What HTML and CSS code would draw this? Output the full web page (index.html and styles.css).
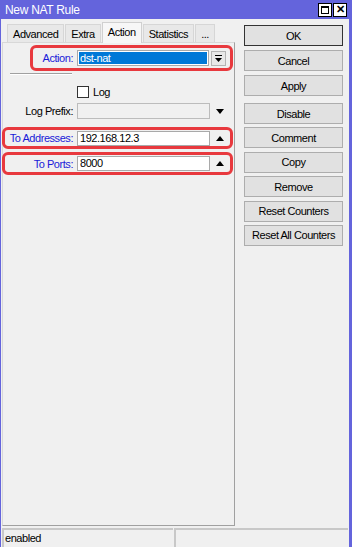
FILE: index.html
```html
<!DOCTYPE html>
<html lang="en">
<head>
    <meta charset="UTF-8">
    <title>New NAT Rule</title>
    <link rel="stylesheet" href="styles.css">
</head>
<body>
    <div class="window">
        <div class="titlebar">
            <span class="title">New NAT Rule</span>
            <div class="title-btns">
                <span class="tbtn"><span class="sq"></span></span>
                <span class="tbtn x">✕</span>
            </div>
        </div>

        <div class="main">
            <div class="left">
                <div class="tabs">
                    <div class="tab">Advanced</div>
                    <div class="tab">Extra</div>
                    <div class="tab active">Action</div>
                    <div class="tab">Statistics</div>
                    <div class="tab">...</div>
                </div>
                <div class="panel">
                    <div class="row hl row-action">
                        <div class="label blue lbl-action">Action:</div>
                        <div class="field sel"><span class="selected">dst-nat</span></div>
                        <div class="dd">
                            <svg viewBox="0 0 9 9" width="9" height="9">
                                <rect x="1" y="1" width="7" height="1" fill="#000"/>
                                <path d="M1 4 H8 L4.5 8 Z" fill="#000"/>
                            </svg>
                        </div>
                    </div>

                    <div class="sep"></div>

                    <div class="check-row">
                        <span class="checkbox"></span>
                        <span>Log</span>
                    </div>

                    <div class="row row-prefix">
                        <div class="label lbl-wide">Log Prefix:</div>
                        <div class="field disabled"></div>
                        <span class="arrow down"></span>
                    </div>

                    <div class="row hl row-addr">
                        <div class="label blue lbl-addr">To Addresses:</div>
                        <div class="field">192.168.12.3</div>
                        <span class="arrow up"></span>
                    </div>

                    <div class="row hl row-ports">
                        <div class="label blue lbl-addr">To Ports:</div>
                        <div class="field">8000</div>
                        <span class="arrow up"></span>
                    </div>
                </div>
            </div>

            <div class="buttons">
                <button class="btn default">OK</button>
                <button class="btn">Cancel</button>
                <button class="btn">Apply</button>
                <div class="btn-group">
                    <button class="btn">Disable</button>
                    <button class="btn">Comment</button>
                    <button class="btn">Copy</button>
                    <button class="btn">Remove</button>
                    <button class="btn">Reset Counters</button>
                    <button class="btn">Reset All Counters</button>
                </div>
            </div>
        </div>

        <div class="statusbar">
            <div class="pane first">enabled</div>
            <div class="pane"></div>
        </div>
    </div>
</body>
</html>
```

FILE: styles.css
```css
* {
    box-sizing: border-box;
}
body {
    margin: 0;
    font-family: 'Liberation Sans', Arial, sans-serif;
    font-size: 11px;
    letter-spacing: -0.45px;
    color: #000;
    background: #f0f0f0;
}
.window {
    width: 352px;
    height: 547px;
    display: flex;
    flex-direction: column;
    background: #f0f0f0;
    border-left: 1px solid #6464dc;
    border-right: 3px solid #6464dc;
}
.titlebar {
    height: 19px;
    flex-shrink: 0;
    background: #6464dc;
    color: #fff;
    display: flex;
    align-items: center;
    justify-content: space-between;
    padding: 0 2px 0 4px;
    font-size: 12px;
    letter-spacing: -0.3px;
}
.title-btns {
    display: flex;
    gap: 1px;
}
.tbtn {
    width: 14px;
    height: 14px;
    background: #fff;
    border: 1px solid #000;
    display: flex;
    align-items: center;
    justify-content: center;
    color: #000;
    font-size: 11px;
    font-weight: bold;
    line-height: 1;
}
.sq {
    width: 8px;
    height: 8px;
    border: 1px solid #000;
    border-top-width: 2px;
}
.main {
    flex: 1;
    display: flex;
    gap: 9px;
    padding: 3px 6px 0 1px;
}
.left {
    width: 234px;
    display: flex;
    flex-direction: column;
}
.tabs {
    display: flex;
    align-items: flex-end;
    height: 20px;
    padding-left: 5px;
}
.tab {
    height: 18px;
    padding: 0 5px;
    display: flex;
    align-items: center;
    background: #e8e8e8;
    border: 1px solid #d6d6d6;
    border-bottom: none;
    margin-right: 1px;
}
.tab.active {
    height: 21px;
    background: #f7f7f7;
    border-color: #d0d0d0;
    padding: 0 5px 2px;
    margin: 0 1px -1px 0;
    position: relative;
    z-index: 1;
}
.panel {
    flex: 1;
    border: 1px solid #d8d8d8;
    border-right-color: #a0a0a0;
    border-bottom-color: #a0a0a0;
    background: #f0f0f0;
    padding-top: 2px;
}
.row {
    display: flex;
    align-items: center;
}
.hl {
    border: 3px solid #e8393e;
    border-radius: 6px;
}
.label {
    text-align: right;
    white-space: nowrap;
    margin-right: 4px;
    flex-shrink: 0;
}
.blue {
    color: #1a1ad8;
}
.row-action {
    margin-left: 27px;
    width: 203px;
    height: 26px;
}
.lbl-action {
    width: 40px;
}
.field {
    width: 133px;
    height: 15px;
    background: #fff;
    border: 1px solid #a9a9a9;
    padding: 0 2px;
    line-height: 13px;
    white-space: nowrap;
}
.field.sel {
    width: 132px;
    height: 16px;
    padding: 1px;
}
.selected {
    display: block;
    height: 12px;
    line-height: 12px;
    background: #0078d7;
    color: #fff;
    padding-left: 1px;
}
.dd {
    width: 15px;
    height: 15px;
    margin-left: 2px;
    background: #e8e8e8;
    border: 1px solid #b4b4b4;
    display: flex;
    align-items: center;
    justify-content: center;
}
.sep {
    margin: 2px 0 0 7px;
    width: 62px;
    height: 2px;
    border-top: 1px solid #a0a0a0;
    border-bottom: 1px solid #fff;
}
.check-row {
    display: flex;
    align-items: center;
    gap: 4px;
    margin: 10px 0 0 74px;
    height: 14px;
}
.checkbox {
    width: 12px;
    height: 12px;
    background: #fff;
    border: 1px solid #333;
}
.row-prefix {
    margin-top: 4px;
    height: 16px;
}
.lbl-wide {
    width: 70px;
}
.field.disabled {
    height: 16px;
    background: #f0f0f0;
    border-color: #bcbcbc;
}
.arrow {
    width: 0;
    height: 0;
    margin-left: 6px;
    border-left: 4px solid transparent;
    border-right: 4px solid transparent;
}
.arrow.down {
    border-top: 5px solid #000;
}
.arrow.up {
    border-bottom: 5px solid #000;
}
.row-addr {
    margin: 8px 0 0 -1px;
    width: 231px;
    height: 22px;
}
.row-ports {
    margin: 3px 0 0 -1px;
    width: 231px;
    height: 23px;
}
.lbl-addr {
    width: 68px;
}
.buttons {
    width: 99px;
    padding-top: 3px;
    display: flex;
    flex-direction: column;
    gap: 4px;
}
.btn-group {
    margin-top: 3px;
    display: flex;
    flex-direction: column;
    gap: 3.4px;
}
.btn {
    height: 21px;
    width: 99px;
    background: #e1e1e1;
    border: 1px solid #adadad;
    font-family: 'Liberation Sans', Arial, sans-serif;
    font-size: 11px;
    letter-spacing: -0.45px;
    color: #000;
    padding: 0;
}
.btn.default {
    border-color: #333;
}
.statusbar {
    height: 19px;
    flex-shrink: 0;
    margin-top: 2px;
    display: flex;
    gap: 1px;
    padding: 0 1px 0 1px;
}
.pane {
    flex: 1;
    border-top: 2px solid #c8c8c8;
    border-left: 2px solid #c8c8c8;
    padding: 2px 0 0 1px;
}
.pane.first {
    flex: 0 0 171px;
}
```
